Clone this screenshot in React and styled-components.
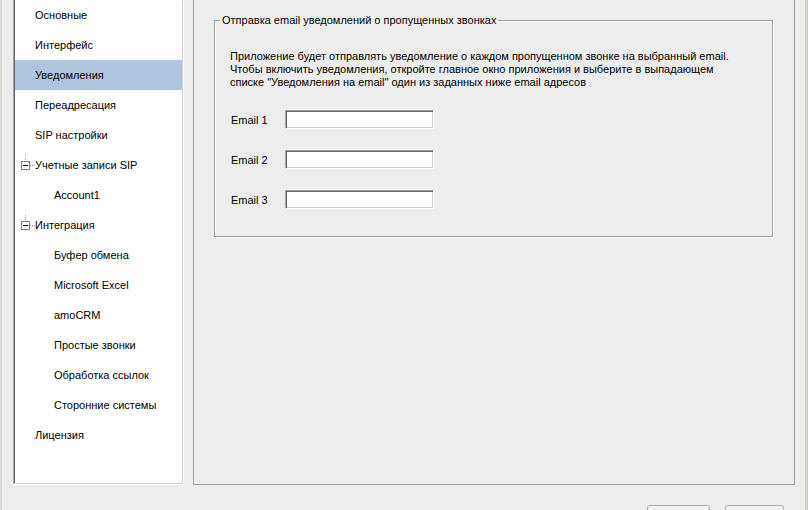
import React from 'react';
import styled, { createGlobalStyle } from 'styled-components';

const GlobalStyle = createGlobalStyle`
  html, body {
    margin: 0;
    padding: 0;
    background: #ededed;
    font-family: "Liberation Sans", Arial, sans-serif;
    font-size: 11px;
    color: #000;
  }
`;

const Window = styled.div`
  width: 808px;
  height: 510px;
  box-sizing: border-box;
  overflow: hidden;
  display: flex;
  flex-direction: column;
  border-left: 2px solid #dcdad5;
  border-right: 3px solid #d4d0c8;
  padding: 0 10px 0 11px;
  background: #ededed;
`;

const Body = styled.div`
  display: flex;
  gap: 10px;
  height: 485px;
  flex-shrink: 0;
`;

const Tree = styled.ul`
  list-style: none;
  margin: 0;
  padding: 0;
  width: 170px;
  height: 484px;
  box-sizing: border-box;
  background: #fff;
  border-left: 1px solid #a0a0a0;
  box-shadow: inset 1px 0 0 #696969, 1px 1px 0 #fff;
  border-right: 1px solid #d4d0c8;
  border-bottom: 1px solid #d4d0c8;
  padding-left: 1px;
`;

const Row = styled.li`
  display: flex;
  align-items: center;
  height: 30px;
  padding-left: ${(p) => p.$indent}px;
  background: ${(p) => (p.$selected ? '#b0c4de' : 'transparent')};
  white-space: nowrap;
`;

const Panel = styled.div`
  flex: 1;
  height: 485px;
  box-sizing: border-box;
  border: 1px solid #a0a0a0;
  border-top: none;
  padding: 14px 21px 0 20px;
`;

const Group = styled.fieldset`
  margin: 0;
  padding: 0 15px 27px 15px;
  border: 1px solid #a0a0a0;
  box-shadow: inset 1px 1px 0 #fff, 1px 1px 0 #fff;
`;

const Legend = styled.legend`
  margin-left: -10px;
  padding: 0 2px;
  line-height: 13px;
`;

const Text = styled.p`
  margin: 23px 0 0;
  line-height: 13px;
`;

const Fields = styled.div`
  display: flex;
  flex-direction: column;
  gap: 21px;
  margin-top: 21px;
`;

const FieldRow = styled.label`
  display: flex;
  align-items: center;
`;

const FieldLabel = styled.span`
  width: 54px;
  padding-left: 1px;
`;

const Input = styled.input`
  width: 149px;
  height: 19px;
  box-sizing: border-box;
  margin: 0;
  padding: 0 3px;
  background: #fff;
  border-style: solid;
  border-width: 1px;
  border-color: #a0a0a0 #fff #fff #a0a0a0;
  box-shadow: inset 1px 1px 0 #696969, inset -1px -1px 0 #d4d0c8;
  font: inherit;
  outline: none;
`;

const Footer = styled.div`
  display: flex;
  justify-content: flex-end;
  gap: 15px;
  padding: 20px 11px 0 0;
`;

const Button = styled.button`
  width: ${(p) => p.$w}px;
  height: 23px;
  flex-shrink: 0;
  border: 1px solid #acacac;
  border-radius: 3px;
  background: linear-gradient(#f4f4f4, #e8e8e8);
  font: inherit;
`;

const Expander = () => (
  <svg width="14" height="20" viewBox="0 0 14 20">
    <line x1="4.5" y1="0" x2="4.5" y2="6" stroke="#a0a0a0" strokeDasharray="1 1" />
    <line x1="9" y1="10.5" x2="14" y2="10.5" stroke="#a0a0a0" strokeDasharray="1 1" />
    <rect x="0.5" y="6.5" width="8" height="8" fill="#fff" stroke="#808080" />
    <line x1="2" y1="10.5" x2="7" y2="10.5" stroke="#000" />
  </svg>
);

const items = [
  { label: 'Основные', level: 0 },
  { label: 'Интерфейс', level: 0 },
  { label: 'Уведомления', level: 0, selected: true },
  { label: 'Переадресация', level: 0 },
  { label: 'SIP настройки', level: 0 },
  { label: 'Учетные записи SIP', level: 0, open: true },
  { label: 'Account1', level: 1 },
  { label: 'Интеграция', level: 0, open: true },
  { label: 'Буфер обмена', level: 1 },
  { label: 'Microsoft Excel', level: 1 },
  { label: 'amoCRM', level: 1 },
  { label: 'Простые звонки', level: 1 },
  { label: 'Обработка ссылок', level: 1 },
  { label: 'Сторонние системы', level: 1 },
  { label: 'Лицензия', level: 0 },
];

export default function App() {
  return (
    <>
      <GlobalStyle />
      <Window>
        <Body>
          <Tree>
            {items.map((it) => (
              <Row
                key={it.label}
                $selected={it.selected}
                $indent={it.open ? 6 : it.level ? 39 : 20}
              >
                {it.open && <Expander />}
                {it.label}
              </Row>
            ))}
          </Tree>
          <Panel>
            <Group>
              <Legend>Отправка email уведомлений о пропущенных звонках</Legend>
              <Text>
                Приложение будет отправлять уведомление о каждом пропущенном звонке на выбранный email.
                <br />
                Чтобы включить уведомления, откройте главное окно приложения и выберите в выпадающем
                <br />
                списке "Уведомления на email" один из заданных ниже email адресов
              </Text>
              <Fields>
                {[1, 2, 3].map((n) => (
                  <FieldRow key={n}>
                    <FieldLabel>Email {n}</FieldLabel>
                    <Input type="text" />
                  </FieldRow>
                ))}
              </Fields>
            </Group>
          </Panel>
        </Body>
        <Footer>
          <Button $w={63} aria-label="OK" />
          <Button $w={59} aria-label="Отмена" />
        </Footer>
      </Window>
    </>
  );
}
